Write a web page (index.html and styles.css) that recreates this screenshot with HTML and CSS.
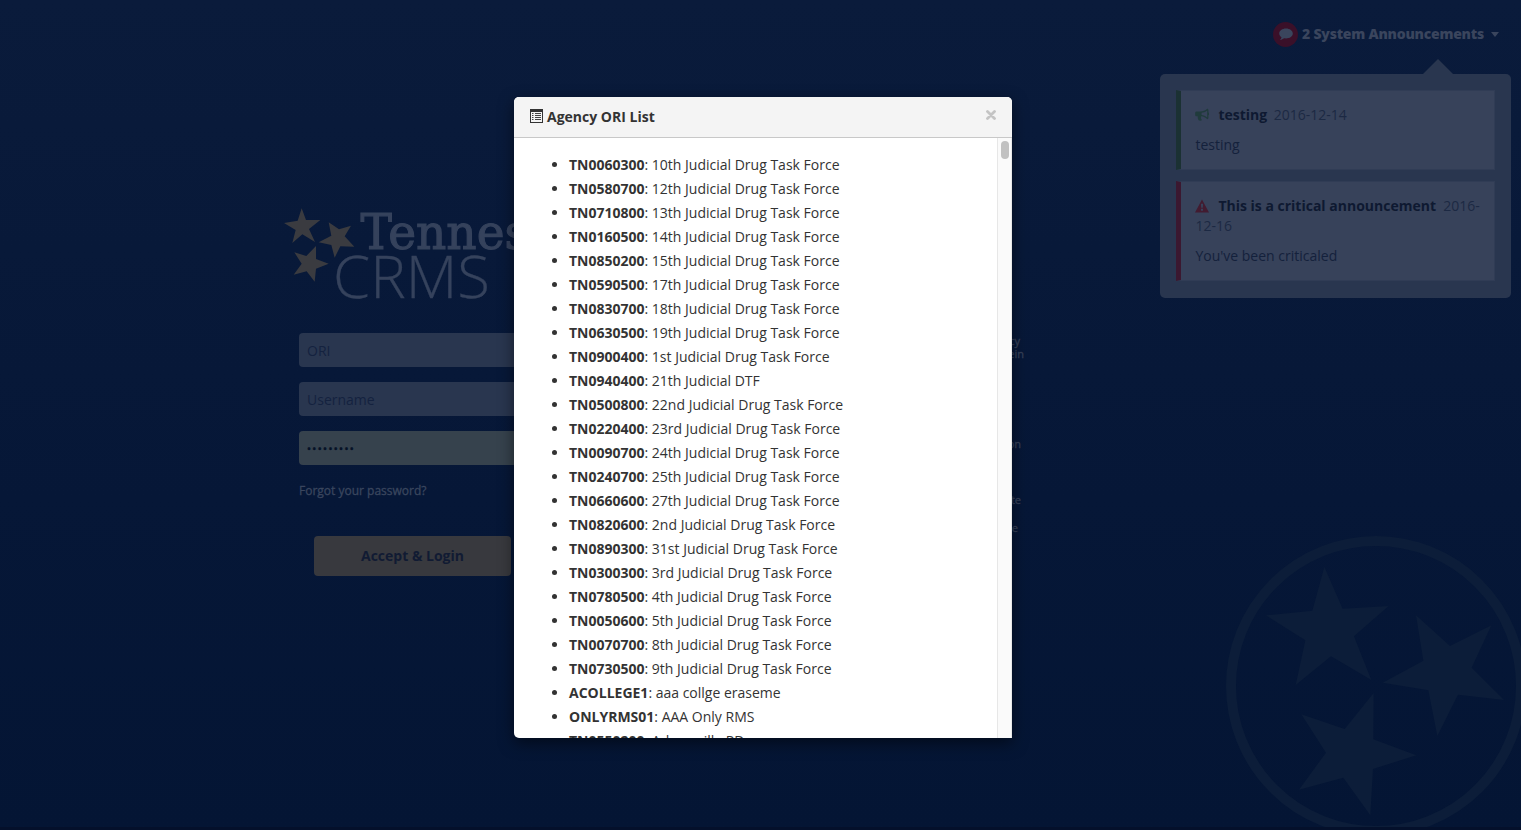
FILE: index.html
```html
<!DOCTYPE html>
<html lang="en">
<head>
<meta charset="utf-8">
<title>Tennessee CRMS</title>
<link rel="stylesheet" href="styles.css">
</head>
<body>
<svg class="seal" viewBox="0 0 960 930" aria-hidden="true">
  <circle cx="525" cy="498" r="435" fill="none" stroke="#0c1d39" stroke-width="30"/>
  <g fill="#0c1d39">
    <path d="M370 140L425 266L563 258L459 349L511 480L390 409L284 495L313 361L195 286L334 272Z"/>
    <path d="M645 286L747 378L871 316L812 443L909 540L771 524L709 648L682 511L545 488L667 422Z"/>
    <path d="M518 519L517 658L646 706L516 747L508 886L427 773L294 809L375 698L301 583L431 627Z"/>
  </g>
</svg>
<div class="page">
  <main class="login">
    <svg class="logo" viewBox="0 0 360 110" role="img" aria-label="Tennessee CRMS">
      <g fill="#3a3b40" transform="translate(-10 -10) scale(.33333)">
        <path d="M95 55L108 90L151 90L117 117L135 156L97 133L67 159L77 120L42 99L83 92Z"/>
        <path d="M176 97L207 118L243 107L224 139L253 170L211 169L194 203L184 165L146 157L184 137Z"/>
        <path d="M138 168L138 207L176 221L138 236L134 275L110 244L71 254L95 221L73 187L109 198Z"/>
      </g>
      <text class="logo-state" x="80.500" y="49" textLength="248" lengthAdjust="spacingAndGlyphs">Tennessee</text>
      <text class="logo-system" x="53" y="98" textLength="157" lengthAdjust="spacingAndGlyphs">CRMS</text>
    </svg>
    <div class="columns">
      <form class="form">
        <div class="field">ORI</div>
        <div class="field">Username</div>
        <div class="field filled">•••••••••</div>
        <div class="forgot">Forgot your password?</div>
        <div class="submit">Accept &amp; Login</div>
      </form>
      <div class="terms">
        <p class="t1">cy</p><p class="t2">ein</p>
        <p class="t3">on</p><p class="t4">te</p><p class="t5">e</p>
      </div>
    </div>
  </main>
  <aside class="announcements">
    <div class="toggle">
      <span class="bubble"><svg width="14" height="13" viewBox="0 0 14 13"><path fill="#3a455d" d="M7 .5C3.200.5.2 2.700.2 5.500C.2 7 1.100 8.300 2.500 9.200C2.400 10.200 1.800 11.100 1 11.900C2.600 11.800 4 11.200 5.100 10.300C9.800 11.100 13.800 8.800 13.800 5.500C13.800 2.700 10.800.5 7 .5Z"/></svg></span>
      <b>2 System Announcements</b><i class="caret"></i>
    </div>
    <div class="panel">
      <div class="card notice">
        <div><svg class="icon" viewBox="0 0 14 14"><path fill="#203b3c" fill-rule="evenodd" d="M12.200.8C12.900.8 13.400 1.300 13.400 2V4.600A1.300 1.300 0 0 1 13.400 7.200V10C13.400 10.700 12.900 11.200 12.200 11.200C10.600 9.500 8.700 8.500 6.300 8.200C5.500 8.700 5.700 9.400 6.200 9.900C5.800 10.700 6.300 11.300 7 11.900C6.200 13 4.200 12.900 3.400 12C3 10.700 2.400 9.500 2.800 8.200H1.600C.7 8.200.2 7.600.2 6.900V4.900C.2 4.200.8 3.600 1.500 3.600H5.300C7.900 3.600 10.300 2.600 12.200.8ZM12.200 2.500C10.400 4 8.400 4.700 6.600 4.800V7.100C8.600 7.300 10.500 8 12.200 9.500Z"/></svg><b>testing</b><span class="date">&nbsp;2016-12-14</span></div>
        <p>testing</p>
      </div>
      <div class="card critical">
        <div><svg class="icon" viewBox="0 0 14 14"><path fill="#421b30" fill-rule="evenodd" d="M7 .5L14 13.500H0ZM5.900 4.800L6.200 8.800H7.800L8.100 4.800ZM6 9.800V11.800H8V9.800Z"/></svg><b>This is a critical announcement</b><span>&nbsp; 2016-12-16</span></div>
        <p>You've been criticaled</p>
      </div>
    </div>
  </aside>
</div>
<section class="modal">
  <header class="modal-header">
    <svg class="list-icon" width="13" height="14" viewBox="0 0 13 14"><path fill="#333" fill-rule="evenodd" d="M0 0H13V14H0ZM1 3V13H12V3Z"/><path fill="none" stroke="#444" d="M2 4.500H3.500M2 6.500H3.500M2 8.500H3.500M2 10.500H3.500M5 4.500H11M5 6.500H11M5 8.500H11M5 10.500H11"/></svg>
    <b>Agency ORI List</b>
    <svg class="close" width="10" height="10" viewBox="0 0 10 10"><path d="M1.500 1.500L8.500 8.500M8.500 1.500L1.500 8.500" stroke="#c4c4c4" stroke-width="2.800" stroke-linecap="round"/></svg>
  </header>
  <div class="modal-body">
    <ul>
      <li><b>TN0060300</b>: 10th Judicial Drug Task Force</li>
      <li><b>TN0580700</b>: 12th Judicial Drug Task Force</li>
      <li><b>TN0710800</b>: 13th Judicial Drug Task Force</li>
      <li><b>TN0160500</b>: 14th Judicial Drug Task Force</li>
      <li><b>TN0850200</b>: 15th Judicial Drug Task Force</li>
      <li><b>TN0590500</b>: 17th Judicial Drug Task Force</li>
      <li><b>TN0830700</b>: 18th Judicial Drug Task Force</li>
      <li><b>TN0630500</b>: 19th Judicial Drug Task Force</li>
      <li><b>TN0900400</b>: 1st Judicial Drug Task Force</li>
      <li><b>TN0940400</b>: 21th Judicial DTF</li>
      <li><b>TN0500800</b>: 22nd Judicial Drug Task Force</li>
      <li><b>TN0220400</b>: 23rd Judicial Drug Task Force</li>
      <li><b>TN0090700</b>: 24th Judicial Drug Task Force</li>
      <li><b>TN0240700</b>: 25th Judicial Drug Task Force</li>
      <li><b>TN0660600</b>: 27th Judicial Drug Task Force</li>
      <li><b>TN0820600</b>: 2nd Judicial Drug Task Force</li>
      <li><b>TN0890300</b>: 31st Judicial Drug Task Force</li>
      <li><b>TN0300300</b>: 3rd Judicial Drug Task Force</li>
      <li><b>TN0780500</b>: 4th Judicial Drug Task Force</li>
      <li><b>TN0050600</b>: 5th Judicial Drug Task Force</li>
      <li><b>TN0070700</b>: 8th Judicial Drug Task Force</li>
      <li><b>TN0730500</b>: 9th Judicial Drug Task Force</li>
      <li><b>ACOLLEGE1</b>: aaa collge eraseme</li>
      <li><b>ONLYRMS01</b>: AAA Only RMS</li>
      <li><b>TN0550200</b>: Adamsville PD</li>
    </ul>
    <div class="track"><div class="thumb"></div></div>
  </div>
</section>
</body>
</html>
```
FILE: styles.css
```css
* { box-sizing: border-box; }
html, body { margin: 0; height: 830px; overflow: hidden; }
body {
  position: relative;
  font: 14px/20px "Open Sans", sans-serif;
  color: #333;
  background: linear-gradient(#0a1b3b, #061737 60%, #041534);
  border-bottom: 3px solid #04102b;
}
p { margin: 0; }
.seal { position: absolute; left: 1201px; top: 520px; width: 320px; height: 310px; }
.page { display: flex; justify-content: space-between; }

.login { padding: 200px 0 0 280px; width: 1030px; }
.logo { display: block; width: 360px; height: 110px; }
.logo-state { font: 49px "DejaVu Serif", serif; fill: #35425c; stroke: #35425c; stroke-width: 1.2px; }
.logo-system { font: 300 58px "Open Sans", sans-serif; fill: #35425c; stroke: #35425c; stroke-width: .3px; }
.columns { display: flex; justify-content: space-between; padding: 23px 0 0 19px; }
.form { width: 320px; }
.field {
  height: 34px;
  margin-bottom: 15px;
  padding: 8px;
  border-radius: 4px;
  background: #29364f;
  color: #14223f;
  line-height: 20px;
}
.field.filled { background: #36424d; color: #051126; font: 10.5px/20px "Open Sans", sans-serif; letter-spacing: 1.4px; -webkit-text-stroke: .5px #051126; }
.forgot { margin-top: 16px; font-size: 12px; color: #3a465e; -webkit-text-stroke: .3px #3a465e; }
.submit {
  width: 197px;
  height: 40px;
  margin: 35px 0 0 15px;
  border-radius: 4px;
  background: #38393e;
  color: #111b33;
  font-weight: 700;
  line-height: 40px;
  text-align: center;
}
.terms { width: 200px; font-size: 11px; line-height: 13px; color: #364159; text-align: right; -webkit-text-stroke: .3px #364159; }
.t1 { padding: 1px 10px 0 0; }
.t2 { padding-right: 6px; }
.t3 { padding: 77px 9px 0 0; }
.t4 { padding: 43px 9px 0 0; }
.t5 { padding: 15px 12px 0 0; }

.announcements { width: 361px; padding: 22px 10px 0 0; color: #14213c; }
.toggle { display: flex; justify-content: flex-end; align-items: center; height: 25px; padding-right: 12px; color: #3a455d; }
.toggle b { margin: -2px 7px 0 4px; font-weight: 800; letter-spacing: -.23px; }
.bubble { display: flex; align-items: center; justify-content: center; width: 25px; height: 25px; border-radius: 50%; background: #3a1029; }
.caret { border: 4px solid transparent; border-top: 5px solid #3a455d; border-bottom: 0; }
.panel { position: relative; display: grid; gap: 11px; margin-top: 27px; padding: 16px 16px 17px; border-radius: 5px; background: #29364f; }
.panel::before {
  content: "";
  position: absolute;
  left: 263px;
  top: -15px;
  border: 15px solid transparent;
  border-top: 0;
  border-bottom-color: #29364f;
}
.card { padding: 14px 14px 14px 14.4px; border: 1px solid #303c55; border-left-width: 5px; background: #37425a; }
.card p { margin-top: 10px; }
.card span { color: #1c2943; }
.card b { color: #0e1931; }
.card .date { margin-left: 3px; }
.notice { border-left-color: #1b3133; }
.critical { border-left-color: #3b1830; }
.icon { width: 14px; height: 14px; margin-right: 9px; vertical-align: -2px; }

.modal {
  position: absolute;
  left: 514px;
  top: 97px;
  width: 498px;
  height: 641px;
  border-radius: 5px 5px 0 5px;
  overflow: hidden;
  background: #fff;
  box-shadow: 0 5px 15px rgba(0, 0, 0, .5);
}
.modal-header { display: flex; align-items: center; height: 41px; padding: 0 16px; background: #f4f4f4; border-bottom: 1px solid #c8c8c8; }
.list-icon { margin: -3px 4px 0 0; }
.close { margin: -4px 0 0 auto; }
.modal-body { display: flex; justify-content: space-between; height: 600px; overflow: hidden; }
ul { margin: 0; padding: 15px 0 0 55px; line-height: 24px; }
.track { width: 15px; padding: 3px; background: #fafafa; border: 1px solid #e7e7e7; border-width: 0 1px; }
.thumb { width: 8px; height: 18px; border-radius: 4px; background: #c1c1c1; }
```
